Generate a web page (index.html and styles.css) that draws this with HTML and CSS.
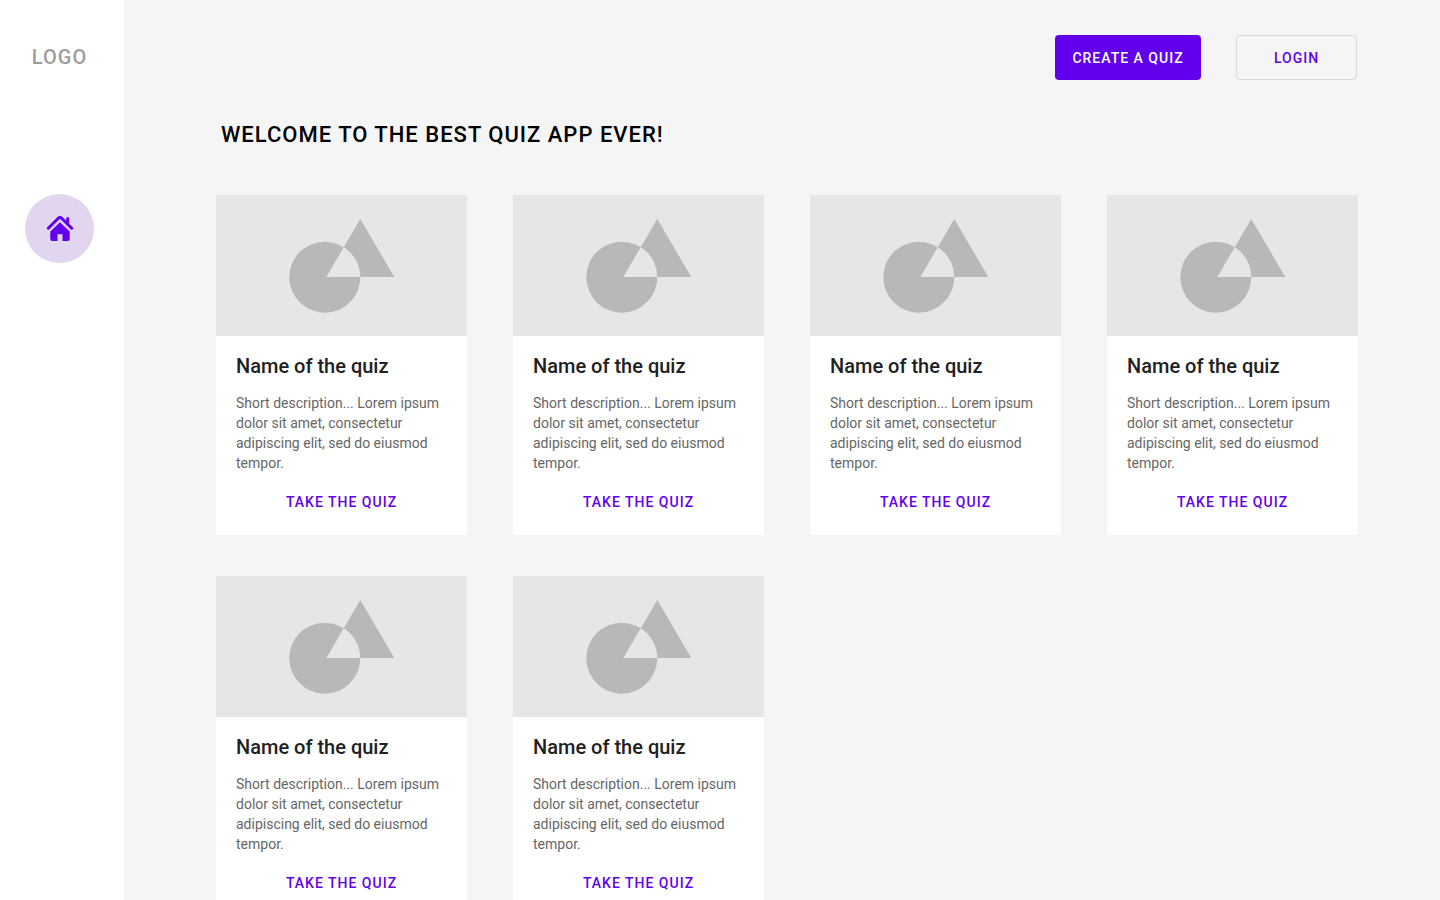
FILE: index.html
```html
<!DOCTYPE html>
<html lang="en">
<head>
  <meta charset="utf-8">
  <meta name="viewport" content="width=device-width, initial-scale=1">
  <title>Quiz app</title>
  <link rel="stylesheet" href="styles.css">
</head>
<body>
  <svg class="sprite" aria-hidden="true">
    <symbol id="shapes" viewBox="0 0 251 141">
      <path fill-rule="evenodd" d="M73.300 82.200a35.500 35.500 0 1 0 71 0a35.500 35.500 0 1 0 -71 0zM144.300 24L178.300 82H110.300z"/>
    </symbol>
  </svg>
  <div class="app">
    <aside class="sidebar">
      <div class="logo">LOGO</div>
      <nav>
        <a class="nav-link" href="#" aria-label="Home">
          <svg class="nav-icon" viewBox="0 0 28 28" aria-hidden="true">
            <path class="roof" d="M2.300 13.200L12.100 3.500Q14 1.600 15.900 3.500L25.700 13.200M21.700 3.500V8"/>
            <path class="walls" d="M14 7.200L23.700 16.400V24Q23.700 26 21.700 26H16.500V19.300H11.500V26H6.300Q4.300 26 4.300 24V16.400z"/>
          </svg>
        </a>
      </nav>
    </aside>
    <main class="main">
      <header class="topbar">
        <button class="button button-primary" type="button">CREATE A QUIZ</button>
        <button class="button button-outline" type="button">LOGIN</button>
      </header>
      <h1 class="title">WELCOME TO THE BEST QUIZ APP EVER!</h1>
      <section class="grid">
        <article class="card">
          <svg class="card-image" viewBox="0 0 251 141" aria-hidden="true"><use href="#shapes"/></svg>
          <div class="card-body">
            <h2 class="card-title">Name of the quiz</h2>
            <p class="card-text">Short description... Lorem ipsum dolor sit amet, consectetur adipiscing elit, sed do eiusmod tempor.</p>
            <button class="card-action" type="button">TAKE THE QUIZ</button>
          </div>
        </article>
        <article class="card">
          <svg class="card-image" viewBox="0 0 251 141" aria-hidden="true"><use href="#shapes"/></svg>
          <div class="card-body">
            <h2 class="card-title">Name of the quiz</h2>
            <p class="card-text">Short description... Lorem ipsum dolor sit amet, consectetur adipiscing elit, sed do eiusmod tempor.</p>
            <button class="card-action" type="button">TAKE THE QUIZ</button>
          </div>
        </article>
        <article class="card">
          <svg class="card-image" viewBox="0 0 251 141" aria-hidden="true"><use href="#shapes"/></svg>
          <div class="card-body">
            <h2 class="card-title">Name of the quiz</h2>
            <p class="card-text">Short description... Lorem ipsum dolor sit amet, consectetur adipiscing elit, sed do eiusmod tempor.</p>
            <button class="card-action" type="button">TAKE THE QUIZ</button>
          </div>
        </article>
        <article class="card">
          <svg class="card-image" viewBox="0 0 251 141" aria-hidden="true"><use href="#shapes"/></svg>
          <div class="card-body">
            <h2 class="card-title">Name of the quiz</h2>
            <p class="card-text">Short description... Lorem ipsum dolor sit amet, consectetur adipiscing elit, sed do eiusmod tempor.</p>
            <button class="card-action" type="button">TAKE THE QUIZ</button>
          </div>
        </article>
        <article class="card">
          <svg class="card-image" viewBox="0 0 251 141" aria-hidden="true"><use href="#shapes"/></svg>
          <div class="card-body">
            <h2 class="card-title">Name of the quiz</h2>
            <p class="card-text">Short description... Lorem ipsum dolor sit amet, consectetur adipiscing elit, sed do eiusmod tempor.</p>
            <button class="card-action" type="button">TAKE THE QUIZ</button>
          </div>
        </article>
        <article class="card">
          <svg class="card-image" viewBox="0 0 251 141" aria-hidden="true"><use href="#shapes"/></svg>
          <div class="card-body">
            <h2 class="card-title">Name of the quiz</h2>
            <p class="card-text">Short description... Lorem ipsum dolor sit amet, consectetur adipiscing elit, sed do eiusmod tempor.</p>
            <button class="card-action" type="button">TAKE THE QUIZ</button>
          </div>
        </article>
      </section>
    </main>
  </div>
</body>
</html>
```

FILE: styles.css
```css
* {
  box-sizing: border-box;
}

body {
  margin: 0;
  background: #f5f5f5;
  font-family: Roboto, "Liberation Sans", sans-serif;
}

button {
  font-family: inherit;
  cursor: pointer;
}

.sprite {
  display: none;
}

.app {
  display: flex;
  height: 100vh;
}

.sidebar {
  flex: 0 0 124px;
  display: flex;
  flex-direction: column;
  align-items: center;
  gap: 125px;
  padding: 45px 5px 0 0;
  background: #fff;
}

.logo {
  color: #9e9c9e;
  font-size: 20px;
  font-weight: 500;
  line-height: 24px;
  letter-spacing: 1px;
}

.nav-link {
  display: flex;
  align-items: center;
  justify-content: center;
  width: 69px;
  height: 69px;
  border-radius: 50%;
  background: #e1d5f0;
}

.nav-icon {
  width: 28px;
  height: 28px;
}

.roof {
  fill: none;
  stroke: #6200ee;
  stroke-width: 3;
  stroke-linecap: round;
  stroke-linejoin: round;
}

.walls {
  fill: #6200ee;
}

.main {
  flex: 1;
  min-width: 0;
  padding: 35px 82px 40px 92px;
  overflow-y: auto;
  scrollbar-width: none;
}

.topbar {
  display: flex;
  justify-content: flex-end;
  gap: 35px;
  padding-right: 1px;
}

.button {
  height: 45px;
  border: 1px solid transparent;
  border-radius: 4px;
  font-size: 14px;
  font-weight: 500;
  letter-spacing: 1px;
}

.button-primary {
  min-width: 146px;
  padding: 0 16px;
  background: #6200ee;
  color: #fff;
}

.button-outline {
  min-width: 121px;
  padding: 0 16px;
  border-color: #d8d8d8;
  background: transparent;
  color: #6200ee;
}

.title {
  margin: 41px 0 46px;
  padding-left: 5px;
  color: #000;
  font-size: 22px;
  font-weight: 500;
  line-height: 28px;
  letter-spacing: 1px;
}

.grid {
  display: grid;
  grid-template-columns: repeat(4, 1fr);
  gap: 41px 46px;
}

.card {
  background: #fff;
}

.card-image {
  display: block;
  width: 100%;
  background: #e6e6e6;
  fill: #b8b8b8;
}

.card-body {
  display: flex;
  flex-direction: column;
  padding: 18px 20px 15px;
}

.card-title {
  margin: 0 0 15px;
  color: #212121;
  font-size: 20px;
  font-weight: 500;
  line-height: 24px;
}

.card-text {
  margin: 0 0 11px;
  color: #666;
  font-size: 14px;
  line-height: 20px;
}

.card-action {
  align-self: center;
  height: 36px;
  padding: 0 8px;
  border: 0;
  background: none;
  color: #6200ee;
  font-size: 14px;
  font-weight: 500;
  letter-spacing: 1px;
}
```
